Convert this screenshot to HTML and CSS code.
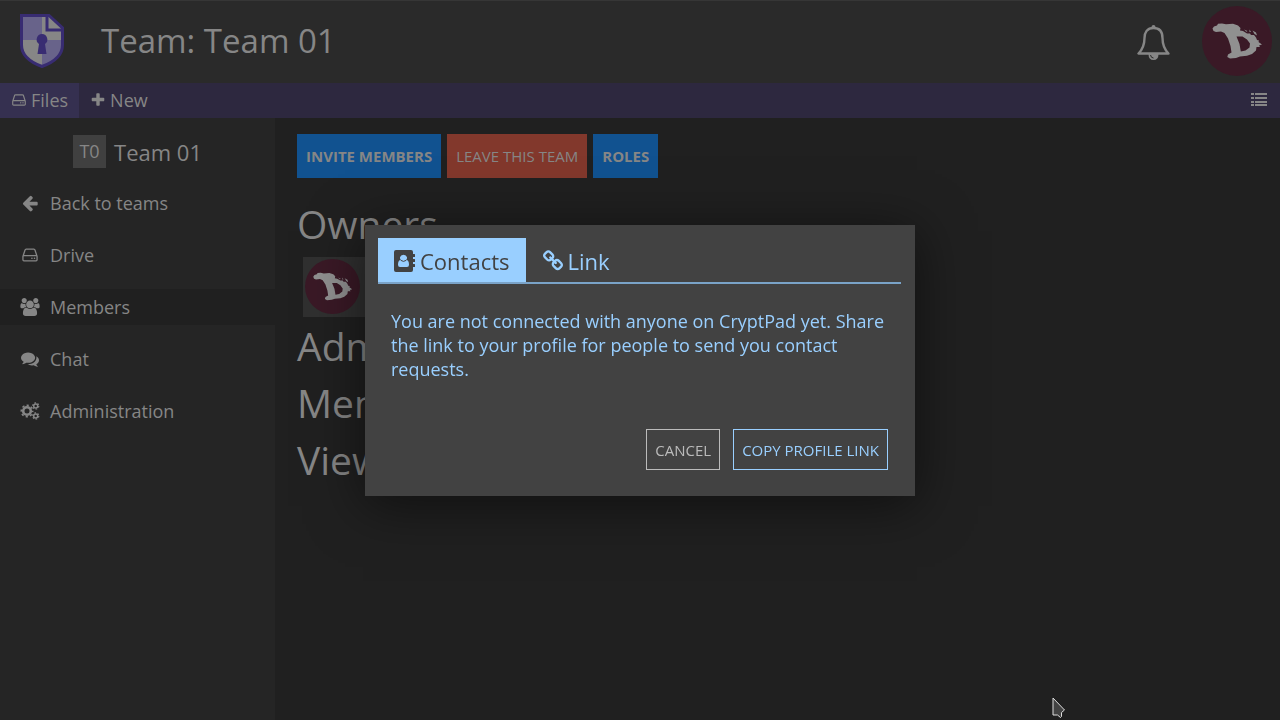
FILE: index.html
```html
<!DOCTYPE html>
<html lang="en">
<head>
<meta charset="utf-8">
<meta name="viewport" content="width=device-width, initial-scale=1">
<title>Team: Team 01</title>
<link rel="stylesheet" href="styles.css">
</head>
<body>
<svg class="sprite" aria-hidden="true">
  <symbol id="hdd" viewBox="0 0 1792 1792"><path d="M1168 1216q0 33-23.500 56.500t-56.500 23.500-56.500-23.500-23.500-56.500 23.500-56.500 56.500-23.500 56.500 23.500 23.500 56.500zm256 0q0 33-23.500 56.500t-56.500 23.500-56.500-23.500-23.500-56.500 23.500-56.500 56.500-23.500 56.500 23.500 23.500 56.500zm112 160v-320q0-13-9.500-22.500t-22.500-9.500h-1216q-13 0-22.500 9.500t-9.500 22.500v320q0 13 9.500 22.500t22.500 9.500h1216q13 0 22.500-9.500t9.500-22.500zm-1230-480h1180l-157-482q-4-13-16-21.500t-26-8.500h-782q-14 0-26 8.500t-16 21.500zm1358 160v320q0 66-47 113t-113 47h-1216q-66 0-113-47t-47-113v-320q0-25 16-75l197-606q17-53 63-86t101-33h782q55 0 101 33t63 86l197 606q16 50 16 75z"/></symbol>
  <symbol id="plus" viewBox="0 0 1792 1792"><path d="M1600 736v192q0 40-28 68t-68 28h-416v416q0 40-28 68t-68 28h-192q-40 0-68-28t-28-68v-416h-416q-40 0-68-28t-28-68v-192q0-40 28-68t68-28h416v-416q0-40 28-68t68-28h192q40 0 68 28t28 68v416h416q40 0 68 28t28 68z"/></symbol>
  <symbol id="back" viewBox="0 0 1792 1792"><path d="M1664 896v128q0 53-32.500 90.500t-84.500 37.500h-704l293 294q38 36 38 90t-38 90l-75 76q-37 37-90 37-52 0-91-37l-651-652q-37-37-37-90 0-52 37-91l651-650q38-38 91-38 52 0 90 38l75 74q38 38 38 91t-38 91l-293 293h704q52 0 84.500 37.500t32.500 90.500z"/></symbol>
  <symbol id="group" viewBox="64 0 1920 1792"><path d="M657 896q-162 5-265 128h-134q-82 0-138-40.500t-56-118.500q0-353 124-353 6 0 43.500 21t97.500 42.500 119 21.500q67 0 133-23-5 37-5 66 0 139 81 256zm1071 637q0 120-73 189.500t-194 69.500h-874q-121 0-194-69.500t-73-189.500q0-53 3.500-103.500t14-109 26.500-108.500 43-97.500 62-81 85.500-53.500 111.500-20q10 0 43 21.500t73 48 107 48 135 21.500 135-21.500 107-48 73-48 43-21.500q61 0 111.500 20t85.500 53.500 62 81 43 97.500 26.500 108.500 14 109 3.500 103.500zm-1024-1277q0 106-75 181t-181 75-181-75-75-181 75-181 181-75 181 75 75 181zm704 384q0 159-112.500 271.500t-271.500 112.500-271.500-112.500-112.500-271.500 112.500-271.500 271.500-112.500 271.500 112.500 112.500 271.500zm576 225q0 78-56 118.500t-138 40.500h-134q-103-123-265-128 81-117 81-256 0-29-5-66 66 23 133 23 59 0 119-21.500t97.500-42.500 43.500-21q124 0 124 353zm-128-609q0 106-75 181t-181 75-181-75-75-181 75-181 181-75 181 75 75 181z"/></symbol>
  <symbol id="chat" viewBox="0 0 1792 1792"><path d="M1408 768q0 139-94 257t-256.500 186.500-353.500 68.500q-86 0-176-16-124 88-278 128-36 9-86 16h-3q-11 0-20.500-8t-11.500-21q-1-3-1-6.500t.5-6.500 2-6l2.500-5 3.500-5.500 4-5 4.500-5 4-4.500q5-6 23-25t26-29.500 22.500-29 25-38.500 20.500-44q-124-72-195-177t-71-224q0-139 94-257t256.500-186.500 353.500-68.500 353.500 68.500 256.500 186.500 94 257zm384 256q0 120-71 224.500t-195 176.500q10 24 20.500 44t25 38.500 22.500 29 26 29.500 23 25q1 1 4 4.500t4.500 5 4 5 3.500 5.500l2.500 5 2 6 .5 6.500-1 6.500q-3 14-13 22t-22 7q-50-7-86-16-154-40-278-128-90 16-176 16-271 0-472-132 58 4 88 4 161 0 309-45t264-129q125-92 192-212t67-254q0-77-23-152 129 71 204 178t75 230z"/></symbol>
  <symbol id="cogs" viewBox="0 0 19 18">
    <g fill="none" stroke="currentColor">
      <circle cx="6.500" cy="9" r="3.800" stroke-width="2.600"/>
      <circle cx="6.500" cy="9" r="5.700" stroke-width="1.600" stroke-dasharray="2.240 2.240" stroke-dashoffset="1.120"/>
      <circle cx="15.200" cy="4" r="2" stroke-width="1.500"/>
      <circle cx="15.200" cy="4" r="3.100" stroke-width="1.200" stroke-dasharray="1.620 1.620"/>
      <circle cx="15.200" cy="14" r="2" stroke-width="1.500"/>
      <circle cx="15.200" cy="14" r="3.100" stroke-width="1.200" stroke-dasharray="1.620 1.620"/>
    </g>
  </symbol>
  <symbol id="link" viewBox="0 0 1792 1792"><path d="M1520 1216q0-40-28-68l-208-208q-28-28-68-28-42 0-72 32 3 3 19 18.500t21.500 21.500 15 19 13 25.500 3.500 27.500q0 40-28 68t-68 28q-15 0-27.500-3.500t-25.500-13-19-15-21.500-21.500-18.500-19q-33 31-33 73 0 40 28 68l206 207q27 27 68 27 40 0 68-26l147-146q28-28 28-67zm-703-705q0-40-28-68l-206-207q-28-28-68-28-39 0-68 27l-147 146q-28 28-28 67 0 40 28 68l208 208q27 27 68 27 42 0 72-31-3-3-19-18.500t-21.500-21.500-15-19-13-25.500-3.500-27.500q0-40 28-68t68-28q15 0 27.500 3.500t25.500 13 19 15 21.500 21.500 18.500 19q33-31 33-73zm895 705q0 120-85 203l-147 146q-83 83-203 83-121 0-204-85l-206-207q-83-83-83-203 0-123 88-209l-88-88q-86 88-208 88-120 0-204-84l-208-208q-84-84-84-204t85-203l147-146q83-83 203-83 121 0 204 85l206 207q83 83 83 203 0 123-88 209l88 88q86-88 208-88 120 0 204 84l208 208q84 84 84 204z"/></symbol>
  <symbol id="contacts" viewBox="0 0 22 22">
    <path fill-rule="evenodd" d="M2 0h15q2 0 2 2v2h1.500q.5 0 .5.500v2q0 .5-.5.500H19v2h1.500q.5 0 .5.500v2q0 .5-.5.500H19v2h1.500q.5 0 .5.500v2q0 .5-.5.500H19v3q0 2-2 2H2q-2 0-2-2V2Q0 0 2 0zM6.800 9.800Q4 10.300 4 14.800 4 17 6 17h7q2 0 2-2.200 0-4.500-2.800-5Q13.300 8.800 13 7.300 12.300 4.800 9.500 4.800T6 7.300q-.2 1.500.8 2.500z"/>
    <path class="contacts-fold" d="M6.700 10.300q2.800 2.200 5.600 0" />
  </symbol>
  <symbol id="list" viewBox="0 0 16 13"><path d="M0 0h3v2H0zM4 0h12v2H4zM0 4h3v2H0zM4 4h12v2H4zM0 8h3v2H0zM4 8h12v2H4zM0 11h3v2H0zM4 11h12v2H4z"/></symbol>
  <symbol id="bell" viewBox="0 0 33 36">
    <path fill="none" stroke="currentColor" stroke-width="2.400" stroke-linejoin="round" d="M16.500 3C10 3 7.500 7.500 7.500 13c0 8-2.500 12-6 15.500h30c-3.500-3.500-6-7.500-6-15.500 0-5.500-2.500-10-9-10z"/>
    <path d="M14.500 3V2q0-2 2-2t2 2v1zM11.500 29h10q0 6-5 6t-5-6z"/>
    <path class="bell-shine" d="M13.500 30q.5 3 3 3"/>
  </symbol>
  <symbol id="avatar" viewBox="0 0 70 70">
    <circle class="avatar-disc" cx="35" cy="35" r="35"/>
    <path class="avatar-mark" fill-rule="evenodd" d="M10.500 22.500L12 20.500 15 19.500 16 17.800 20 17.500 24 18.300 31 17.800 36 19.500 38.500 22 38 24.500 41 25 45 27.500 48 27.500 49 29 52 29 54 31.500 55 34 57 34.500 56.500 36 60 38.500 57 39.500 58 41 54.500 41 54 44.500 50 48 45 49.800 38 50.500 34 52 28 52.500 25.300 51 26 48.500 29.500 46.500 28.500 40 26 32.500 22.500 27 19 25.500 14 26 11.500 25ZM34.500 30.500L37.500 38 38.800 45.500 43.500 44.500 47.500 41.500 48 37.500 45 33.500 40.500 30.500ZM42 23.500L45.500 25 44.500 25.800ZM47.500 23.500L49 26 47.500 26ZM50.500 24.500L54 26.500 55 29.500 52.500 28Z"/>
  </symbol>
</svg>

<header class="topbar">
  <a class="logo" href="#" aria-label="CryptPad home">
    <svg viewBox="0 0 44 54" aria-hidden="true">
      <path class="logo-light" d="M1.500 1.500H29L42.500 14v17q0 14-20.500 21.500Q1.500 45 1.500 31z"/>
      <path class="logo-tint" d="M2 2h20v24H2zM22 26h20v5q0 14-20 21z"/>
      <path class="logo-line" d="M1.500 1.500H29L42.500 14v17q0 14-20.500 21.500Q1.500 45 1.500 31z"/>
      <path class="logo-fold" d="M27 2v14h15"/>
      <path class="logo-fill" d="M22 20a5.500 5.500 0 0 1 3 10l1.500 10h-9L19 30a5.500 5.500 0 0 1 3-10z"/>
    </svg>
  </a>
  <h1 class="page-title">Team: Team 01</h1>
  <button class="icon-button" type="button" aria-label="Notifications"><svg class="bell"><use href="#bell"/></svg></button>
  <button class="icon-button" type="button" aria-label="User menu"><svg class="avatar-large"><use href="#avatar"/></svg></button>
</header>

<nav class="toolbar" aria-label="Toolbar">
  <button class="tool tool-active" type="button"><svg class="tool-icon"><use href="#hdd"/></svg>Files</button>
  <button class="tool" type="button"><svg class="tool-icon"><use href="#plus"/></svg>New</button>
  <button class="tool tool-list" type="button" aria-label="List view"><svg class="list-icon"><use href="#list"/></svg></button>
</nav>

<div class="workspace">
  <aside class="sidebar">
    <div class="team"><span class="team-badge">T0</span><span class="team-name">Team 01</span></div>
    <nav class="menu" aria-label="Team">
      <a class="menu-item" href="#"><svg class="menu-icon"><use href="#back"/></svg>Back to teams</a>
      <a class="menu-item" href="#"><svg class="menu-icon"><use href="#hdd"/></svg>Drive</a>
      <a class="menu-item menu-active" href="#" aria-current="page"><svg class="menu-icon"><use href="#group"/></svg>Members</a>
      <a class="menu-item" href="#"><svg class="menu-icon"><use href="#chat"/></svg>Chat</a>
      <a class="menu-item" href="#"><svg class="menu-icon"><use href="#cogs"/></svg>Administration</a>
    </nav>
  </aside>
  <main class="content">
    <div class="actions">
      <button class="action action-primary" type="button">INVITE MEMBERS</button>
      <button class="action action-danger" type="button">LEAVE THIS TEAM</button>
      <button class="action action-primary" type="button">ROLES</button>
    </div>
    <h2 class="role">Owners</h2>
    <div class="member"><svg class="avatar-small"><use href="#avatar"/></svg></div>
    <h2 class="role">Admins</h2>
    <h2 class="role">Members</h2>
    <h2 class="role">Viewers</h2>
  </main>
</div>

<div class="overlay">
  <section class="dialog" role="dialog" aria-modal="true" aria-label="Invite members">
    <div class="tabs" role="tablist">
      <button class="tab tab-active" type="button" role="tab" aria-selected="true"><svg class="tab-icon"><use href="#contacts"/></svg>Contacts</button>
      <button class="tab" type="button" role="tab" aria-selected="false"><svg class="tab-icon"><use href="#link"/></svg>Link</button>
    </div>
    <p class="message">You are not connected with anyone on CryptPad yet. Share the link to your profile for people to send you contact requests.</p>
    <div class="dialog-actions">
      <button class="outline" type="button">CANCEL</button>
      <button class="outline outline-accent" type="button">COPY PROFILE LINK</button>
    </div>
  </section>
</div>

<svg class="pointer" viewBox="0 0 14 22" aria-hidden="true"><path d="M1 1v17h4.500l3 2.500 1-1v-4l3-2.500z"/></svg>
</body>
</html>
```
FILE: styles.css
```css
* { box-sizing: border-box; }

body {
  margin: 0;
  min-height: 100vh;
  display: flex;
  flex-direction: column;
  overflow: hidden;
  background: #202020;
  color: #868686;
  font: 18px/24px "Open Sans", "Noto Sans", sans-serif;
}

button {
  border: 0;
  padding: 0;
  background: none;
  color: inherit;
  font: inherit;
  cursor: pointer;
}

a { color: inherit; text-decoration: none; }
svg { display: block; flex: none; fill: currentColor; }
.sprite { position: absolute; width: 0; height: 0; }

.topbar {
  display: flex;
  align-items: center;
  height: 83px;
  padding: 0 8px 3px 20px;
  border-top: 1px solid #363636;
  background: #2a2a2a;
}
.logo svg { width: 44px; height: 54px; }
.logo-light { fill: #868686; }
.logo-tint { fill: #68638a; }
.logo-line { fill: none; stroke: #382c72; stroke-width: 3; }
.logo-fold { fill: none; stroke: #382c72; stroke-width: 3; }
.logo-fill { fill: #382c72; }
.page-title {
  flex: 1;
  margin: 0 0 0 37px;
  font-size: 33px;
  font-weight: 400;
  line-height: 48px;
}
.bell { width: 33px; height: 36px; margin: 4px 32px 0 0; }
.bell-shine { fill: none; stroke: #2a2a2a; }
.avatar-large { width: 70px; height: 70px; }
.avatar-small { width: 55px; height: 55px; }
.avatar-disc { fill: #3a1926; }
.avatar-mark { fill: #909090; }

.toolbar {
  display: flex;
  height: 35px;
  background: #2d283f;
}
.tool {
  display: flex;
  align-items: center;
  gap: 4px;
  padding: 0 11px 2px;
}
.tool-active { background: #353050; }
.tool-icon { width: 16px; height: 16px; }
.tool-list { margin-left: auto; padding-right: 13px; }
.list-icon { width: 16px; height: 13px; }

.workspace { flex: 1; display: flex; }
.sidebar { width: 275px; padding-top: 17px; background: #252525; }
.team {
  display: flex;
  align-items: center;
  justify-content: center;
  gap: 8px;
  margin-bottom: 17px;
}
.team-badge {
  width: 33px;
  background: #404040;
  line-height: 33px;
  text-align: center;
}
.team-name { font-size: 22px; }
.menu { display: grid; gap: 16px; }
.menu-item {
  display: flex;
  align-items: center;
  gap: 10px;
  height: 36px;
  padding-left: 20px;
}
.menu-active { background: #202020; }
.menu-icon { width: 20px; height: 18px; }

.content { flex: 1; padding: 16px 22px; }
.actions { display: flex; gap: 6px; margin-bottom: 22px; }
.action {
  height: 44px;
  padding: 0 9px;
  font-size: 15px;
}
.action-primary { background: #115290; font-weight: 700; }
.action-danger { background: #82382c; }
.role {
  margin: 0 0 9px;
  font-size: 39px;
  font-weight: 400;
  line-height: 48px;
}
.member {
  display: flex;
  width: 240px;
  height: 60px;
  margin: 0 6px 5px;
  padding: 2px;
  background: #303030;
}

.overlay {
  position: fixed;
  inset: 0;
  display: flex;
  align-items: center;
  justify-content: center;
  padding-top: 1px;
}
.dialog {
  width: 550px;
  padding: 13px 14px 26px 13px;
  background: #424242;
  box-shadow: 0 8px 50px 2px rgba(0, 0, 0, 0.5);
  color: #99cfff;
}
.tabs { display: flex; border-bottom: 2px solid #7aa3c8; }
.tab {
  display: flex;
  align-items: center;
  gap: 4px;
  height: 44px;
  padding: 2px 16px 0;
  font-size: 22px;
}
.tab-active { background: #99cfff; color: #424242; }
.tab-icon { width: 22px; height: 22px; }
.contacts-fold { fill: none; stroke: #424242; }
.message { margin: 25px 13px 48px; }
.dialog-actions {
  display: flex;
  justify-content: flex-end;
  gap: 13px;
  margin-right: 13px;
}
.outline {
  height: 41px;
  padding: 0 8px;
  border: 1px solid #bbbbbb;
  color: #bbbbbb;
  font-size: 15px;
}
.outline-accent { border-color: #99cfff; color: #99cfff; }

.pointer {
  position: absolute;
  left: 1052px;
  top: 697px;
  width: 14px;
  height: 22px;
  fill: #424242;
  stroke: #dddddd;
}
```
